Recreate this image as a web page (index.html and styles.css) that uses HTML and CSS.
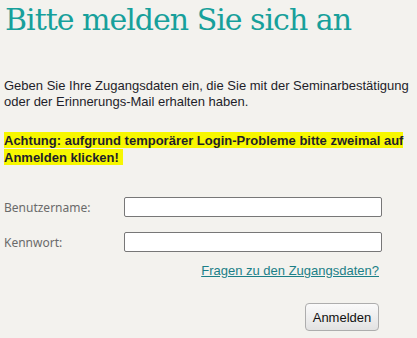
FILE: index.html
```html
<!DOCTYPE html>
<html lang="de">
<head>
    <meta charset="UTF-8">
    <title>Anmelden</title>
    <link rel="stylesheet" href="styles.css">
</head>
<body>
    <main class="login">
        <h1>Bitte melden Sie sich an</h1>

        <p class="intro">Geben Sie Ihre Zugangsdaten ein, die Sie mit der Seminarbestätigung oder der Erinnerungs-Mail erhalten haben.</p>

        <p class="notice"><span>Achtung: aufgrund temporärer Login-Probleme bitte zweimal auf Anmelden klicken!</span></p>

        <form class="login-form">
            <div class="row">
                <label for="user">Benutzername:</label>
                <input type="text" id="user">
            </div>
            <div class="row">
                <label for="pass">Kennwort:</label>
                <input type="password" id="pass">
            </div>
            <div class="help">
                <a href="#">Fragen zu den Zugangsdaten?</a>
            </div>
            <div class="actions">
                <button type="button">Anmelden</button>
            </div>
        </form>
    </main>
</body>
</html>
```

FILE: styles.css
```css
body {
    margin: 0;
    padding: 0;
    background-color: #f3f2ee;
    font-family: 'Liberation Sans', Arial, sans-serif;
    color: #1e1e2a;
}

.login {
    width: 382px;
    padding: 0 0 0 4px;
}

h1 {
    font-family: 'DejaVu Serif', serif;
    font-weight: normal;
    font-size: 30px;
    color: #17a09b;
    margin: 0;
    padding: 2px 0 0 1px;
    line-height: 36px;
    letter-spacing: -1px;
}

.intro {
    font-size: 13px;
    line-height: 16px;
    margin: 40px 0 0;
    width: 410px;
}

.notice {
    font-size: 13px;
    font-weight: bold;
    line-height: 17px;
    margin: 22px 0 0;
    width: 410px;
}

.notice span {
    background-color: #f7f700;
    padding: 1px 4px 0 0;
}

.login-form {
    margin-top: 31px;
}

.row {
    display: flex;
    align-items: center;
    margin-bottom: 15px;
}

.row label {
    width: 120px;
    font-family: 'Noto Sans', sans-serif;
    font-size: 12px;
    color: #6a6a6a;
}

.row input {
    width: 252px;
    height: 16px;
    margin: 0;
    padding: 1px 2px;
    border: 1px solid #777;
    border-radius: 2px;
    background: #fff;
}

.help {
    text-align: right;
    margin-top: -6px;
    padding-right: 7px;
}

.help a {
    font-size: 13px;
    color: #1b7f87;
}

.actions {
    text-align: right;
    margin-top: 24px;
}

.actions button {
    font-family: 'Liberation Sans', Arial, sans-serif;
    font-size: 13px;
    color: #111;
    height: 28px;
    width: 74px;
    margin-right: 7px;
    border: 1px solid #adadad;
    border-radius: 4px;
    background: linear-gradient(#fafafa, #e2e2e2);
}
```
